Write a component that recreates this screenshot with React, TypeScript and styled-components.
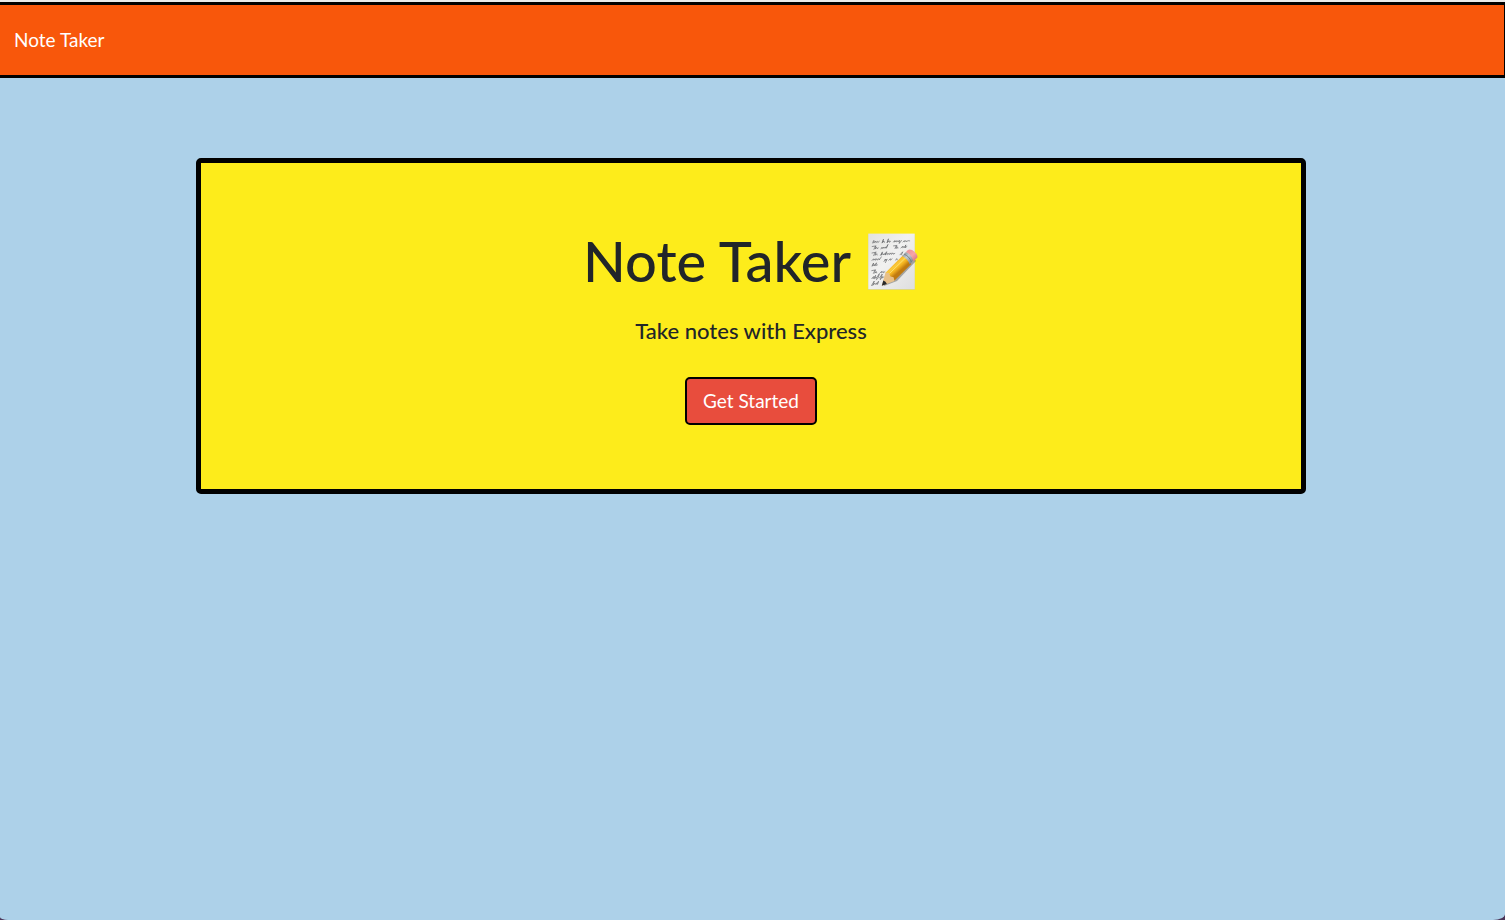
import React from "react";
import styled, { createGlobalStyle } from "styled-components";

const GlobalStyle = createGlobalStyle`
  *, *::before, *::after { box-sizing: border-box; }
  html { background: #4c3558; }
  body {
    margin: 0;
    color: #212529;
    font-family: Lato, "Liberation Sans", sans-serif;
    font-size: 16px;
    line-height: 24px;
  }
`;

const Page = styled.div`
  min-height: 100vh;
  display: flex;
  flex-direction: column;
  background: #add1e9;
  border-top: 2px solid #e9e9e9;
  border-radius: 0 0 12px 8px / 0 0 6px 3px;
`;

const Navbar = styled.nav`
  display: flex;
  align-items: center;
  height: 76px;
  padding: 0 14px;
  background: #f8570b;
  border: 3px solid #000;
  border-left: 0;
  border-right-width: 1px;
`;

const Brand = styled.a`
  color: #fff;
  font-size: 19px;
  line-height: 28px;
  text-decoration: none;
`;

const Main = styled.main`
  display: flex;
  justify-content: center;
  padding: 80px 18px 80px 15px;
`;

const Jumbotron = styled.section`
  display: flex;
  flex-direction: column;
  align-items: center;
  width: 100%;
  max-width: 1110px;
  padding: 64px 32px;
  background: #fdec1b;
  border: 5px solid #000;
  border-radius: 5px;
  text-align: center;
`;

const Title = styled.h1`
  display: flex;
  align-items: center;
  gap: 16px;
  margin: 0 0 24px;
  font-size: 56px;
  line-height: 68px;
  font-weight: 500;
`;

const Lead = styled.h4`
  margin: 0 0 34px;
  font-size: 22px;
  line-height: 24px;
  font-weight: 500;
`;

const StartButton = styled.button`
  height: 48px;
  padding: 0 16px;
  border: 2px solid #000;
  border-radius: 5px;
  background: #e84d3d;
  color: #fff;
  font: inherit;
  font-size: 19px;
  line-height: 28px;
  cursor: pointer;
`;

const Memo = () => (
  <svg width="52" height="58" viewBox="0 -1 52 58" role="img" aria-label="Memo">
    <defs>
      <linearGradient id="paper" x1="0" y1="0" x2="1" y2="1">
        <stop offset="0" stopColor="#e2e2df" />
        <stop offset="0.45" stopColor="#f1f1f0" />
        <stop offset="1" stopColor="#dededf" />
      </linearGradient>
      <linearGradient id="pencil" x1="26" y1="30" x2="33" y2="38" gradientUnits="userSpaceOnUse">
        <stop offset="0" stopColor="#f2ab1b" />
        <stop offset="0.35" stopColor="#fbcb3d" />
        <stop offset="0.65" stopColor="#f3b21e" />
        <stop offset="1" stopColor="#c07a10" />
      </linearGradient>
      <linearGradient id="ferrule" x1="36" y1="19" x2="46" y2="31" gradientUnits="userSpaceOnUse">
        <stop offset="0" stopColor="#7f8890" />
        <stop offset="0.4" stopColor="#c3cbd1" />
        <stop offset="1" stopColor="#6c747d" />
      </linearGradient>
      <linearGradient id="eraser" x1="40" y1="17" x2="50" y2="28" gradientUnits="userSpaceOnUse">
        <stop offset="0" stopColor="#ec9298" />
        <stop offset="0.5" stopColor="#f6a5a8" />
        <stop offset="1" stopColor="#d46d77" />
      </linearGradient>
    </defs>
    <rect x="1" y="1" width="47" height="56" fill="#c9ca9c" opacity="0.6" />
    <rect x="1.3" y="0.6" width="46.4" height="55.6" fill="url(#paper)" />
    <g fill="none" stroke="#55575b" strokeWidth="0.6" strokeLinecap="round" strokeLinejoin="round">
      <path d="M5.6 10q1.2-3.8 1.6-2.3l-.5 2.4 2-2.1.2 1.7 1.5-1.4.4 1.2 1.5-1.2M15 9.8l1.5-3.6-1 3.4 1.5-1.6.3 1.4M20 9.6l1.5-3.8-1.2 3.7 2-1.7.1 1.5 1.2-1M26.5 9q1-2 1.7-1.2l-.7 1.2 2-1.2.2 1.1 1.5-1.3.1 1.2 1.6-1.5-.7 3.2 2.3-3M36 9l1.3-1.4.2 1.2 1.5-1.2.2 1 2-.9 1.5.2" />
      <path d="M5.2 13.5l3.3-.5-1.6 3.3M8.8 12.8l-.7 3.3 1.6-1.8.3 1.4 1.3-.8M14 15.9l1.1-1.8.3 1.4 1.4-1.4.2 1.3 1.3-1.5.5 1.3 2.2-3.8-1.5 3.6M26.5 12.9l2.8-.4-1.3 3M29.8 12.3l-.8 3.2 1.7-1.6.1 1.3M34 15l1.5-1.7.2 1.4 1.2-1.2.2 1.2 1.8-2.8-.8 2.9 1.8-1.3" />
      <path d="M5 20l3.4-.7-1.8 3.2M8.9 19l-.8 3.4 1.6-1.7.4 1.3M13.5 22.3l2-3.4-1.3 3.2 1.7-1.6.3 1.5 1.5-1.5.2 1.3 1.7-3.1-1.2 3.1 2-1.5.2 1.3 1.6-1.4.1 1.3 1.8-1.6.1 1.5 1.8-1.5.3 1.3 1.5-.8M33 21.8l2.7-3-1.2 3" />
      <path d="M5 27.5l1.5-1.7.3 1.4 1.5-1.4.1 1.4 1.6-1.5.2 1.4 1.8-1.5.3 1.3 2-3M17 28.5l1.4-2.5.2 1.5 1.6-1.4-1.8 3.5M21.8 27.3l1.5-1.6.2 1.5 1.6-1.4M28.5 27l1.5-1.4.2 1.3M5 33l1.6-3-1 3 1.8-1.5.1 1.3 2-3-.9 2.8 1.8-.7" />
      <path d="M4.8 37.6l3.2-.6-1.6 3.4M8.5 36.8l-.8 3.4 1.8-1.5.2 1.2M13 40l1.5-1.6.1 1.4 1.6-1.4.2 1.4 1.5-1.2M20.8 39l1.4-1.5.3 1.4" />
      <path d="M4.8 45.5q2-3.2 2.3-1.3l-1 1.5 2.6-3.4-1.2 3.4 1.7-1.5.2 1.2 2.9-4.7q-.3 4-2.9 6.2M12.5 45l2.8-4-2 5.7 2-3.2.2 1.4 1.5-1.2" />
      <path d="M4.5 52.5l2.8-4.5-1.6 4.5 2-2.3.3 1.3 1.5-1.4.2 1.2 1.8-3-.9 3" />
    </g>
    <path d="M17 53l13-5 19-20-3-4-29 26z" fill="#3b3b38" opacity="0.4" />
    <path d="M18.5 39.8l17.8-17.9 8 9-17 16.8z" fill="url(#pencil)" />
    <path d="M22.4 40.5l16.5-15.9" stroke="#ffdf66" strokeWidth="1" />
    <path d="M14.8 52.8l3.7-13.3 3.3.6 1.7 3.4 3.1.8.9 3.7z" fill="#e8c088" />
    <path d="M14.8 52.8l1.5-5.3q2.6.7 3.6 3.4z" fill="#292a2b" />
    <path d="M35 23.1l4-4.2q5.6 2 7.5 8.2l-3.9 4.4q-1.7-5.8-7.6-8.4z" fill="url(#ferrule)" />
    <path d="M37 21q5.8 2.8 7.5 8.2" stroke="#69737c" strokeWidth="0.8" fill="none" />
    <path d="M39 18.9l1.9-2q2.8-1.5 6.7 1.9 3.7 3.4 2.6 6l-3.7 3.5q-1.7-6.6-7.5-9.4z" fill="url(#eraser)" />
  </svg>
);

export default function App() {
  return (
    <>
      <GlobalStyle />
      <Page>
        <Navbar>
          <Brand href="/">Note Taker</Brand>
        </Navbar>
        <Main>
          <Jumbotron>
            <Title>
              Note Taker
              <Memo />
            </Title>
            <Lead>Take notes with Express</Lead>
            <StartButton type="button">Get Started</StartButton>
          </Jumbotron>
        </Main>
      </Page>
    </>
  );
}
